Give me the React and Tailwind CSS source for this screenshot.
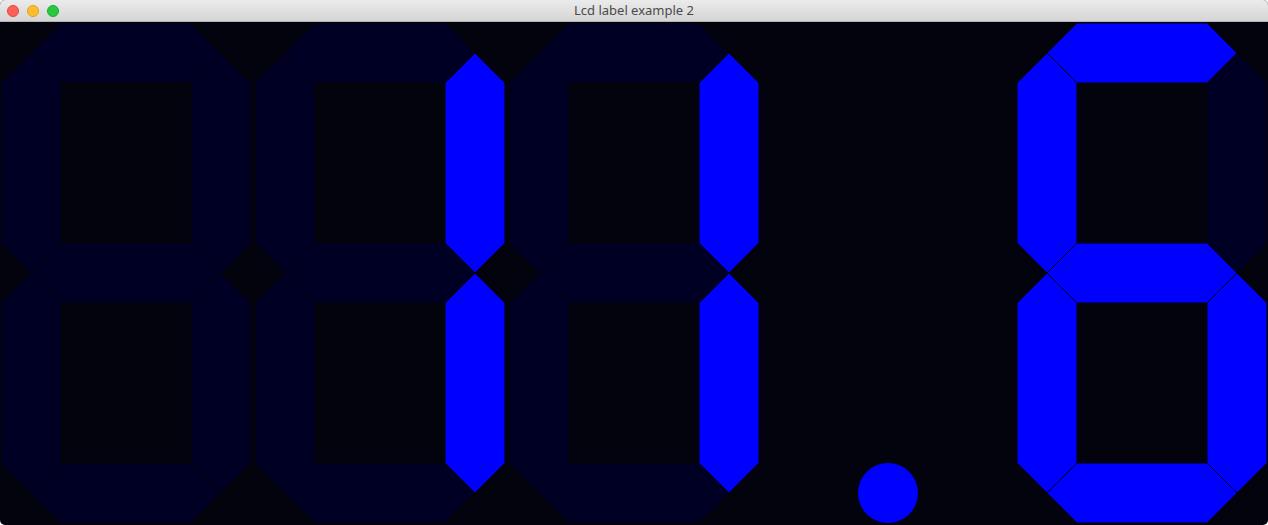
const W = 250;
const H = 500;
const T = 60;
const h = T / 2;
const m = H / 2;

const SEGMENTS = {
  a: [[T, 0], [W - T, 0], [W - h, h], [W - T, T], [T, T], [h, h]],
  b: [[W - h, h], [W, T], [W, m - h], [W - h, m], [W - T, m - h], [W - T, T]],
  c: [[W - h, m], [W, m + h], [W, H - T], [W - h, H - h], [W - T, H - T], [W - T, m + h]],
  d: [[T, H - T], [W - T, H - T], [W - h, H - h], [W - T, H], [T, H], [h, H - h]],
  e: [[h, m], [T, m + h], [T, H - T], [h, H - h], [0, H - T], [0, m + h]],
  f: [[h, h], [T, T], [T, m - h], [h, m], [0, m - h], [0, T]],
  g: [[T, m - h], [W - T, m - h], [W - h, m], [W - T, m + h], [T, m + h], [h, m]],
};

const DIGITS = {
  ' ': '',
  1: 'bc',
  6: 'acdefg',
};

const ON = '#0000ff';
const OFF = '#000024';
const BG = '#03030d';

function Digit({ value }) {
  const lit = DIGITS[value];
  return (
    <svg width={W} height={H} viewBox={`0 0 ${W} ${H}`} className="shrink-0">
      {Object.entries(SEGMENTS).map(([key, pts]) => (
        <polygon
          key={key}
          points={pts.map((p) => p.join(',')).join(' ')}
          fill={lit.includes(key) ? ON : OFF}
          stroke={BG}
          strokeWidth="1"
        />
      ))}
    </svg>
  );
}

function Dot() {
  return (
    <svg width={W} height={H} viewBox={`0 0 ${W} ${H}`} className="shrink-0">
      <circle cx={W / 2} cy={H - h} r={h} fill={ON} />
    </svg>
  );
}

export default function App() {
  return (
    <div className="w-[1268px] h-[525px] flex flex-col overflow-hidden rounded-[5px] bg-[#03030d]">
      <div className="relative h-[22px] shrink-0 flex items-center justify-center bg-gradient-to-b from-[#ebebeb] to-[#d5d5d5] border-b border-[#b4b4b4]">
        <div className="absolute left-[7px] top-[5px] flex gap-[8px]">
          <span className="w-[12px] h-[12px] rounded-full bg-[#fe5f57] border border-[#e2463f]" />
          <span className="w-[12px] h-[12px] rounded-full bg-[#febc2e] border border-[#e1a116]" />
          <span className="w-[12px] h-[12px] rounded-full bg-[#28c840] border border-[#1aab29]" />
        </div>
        <span className="text-[13px] text-[#4a4a4a] font-['Noto_Sans',sans-serif] leading-none">
          Lcd label example 2
        </span>
      </div>
      <div className="flex-1 flex gap-[4px] pl-[1px] pt-[1px]">
        <Digit value=" " />
        <Digit value={1} />
        <Digit value={1} />
        <Dot />
        <Digit value={6} />
      </div>
    </div>
  );
}
